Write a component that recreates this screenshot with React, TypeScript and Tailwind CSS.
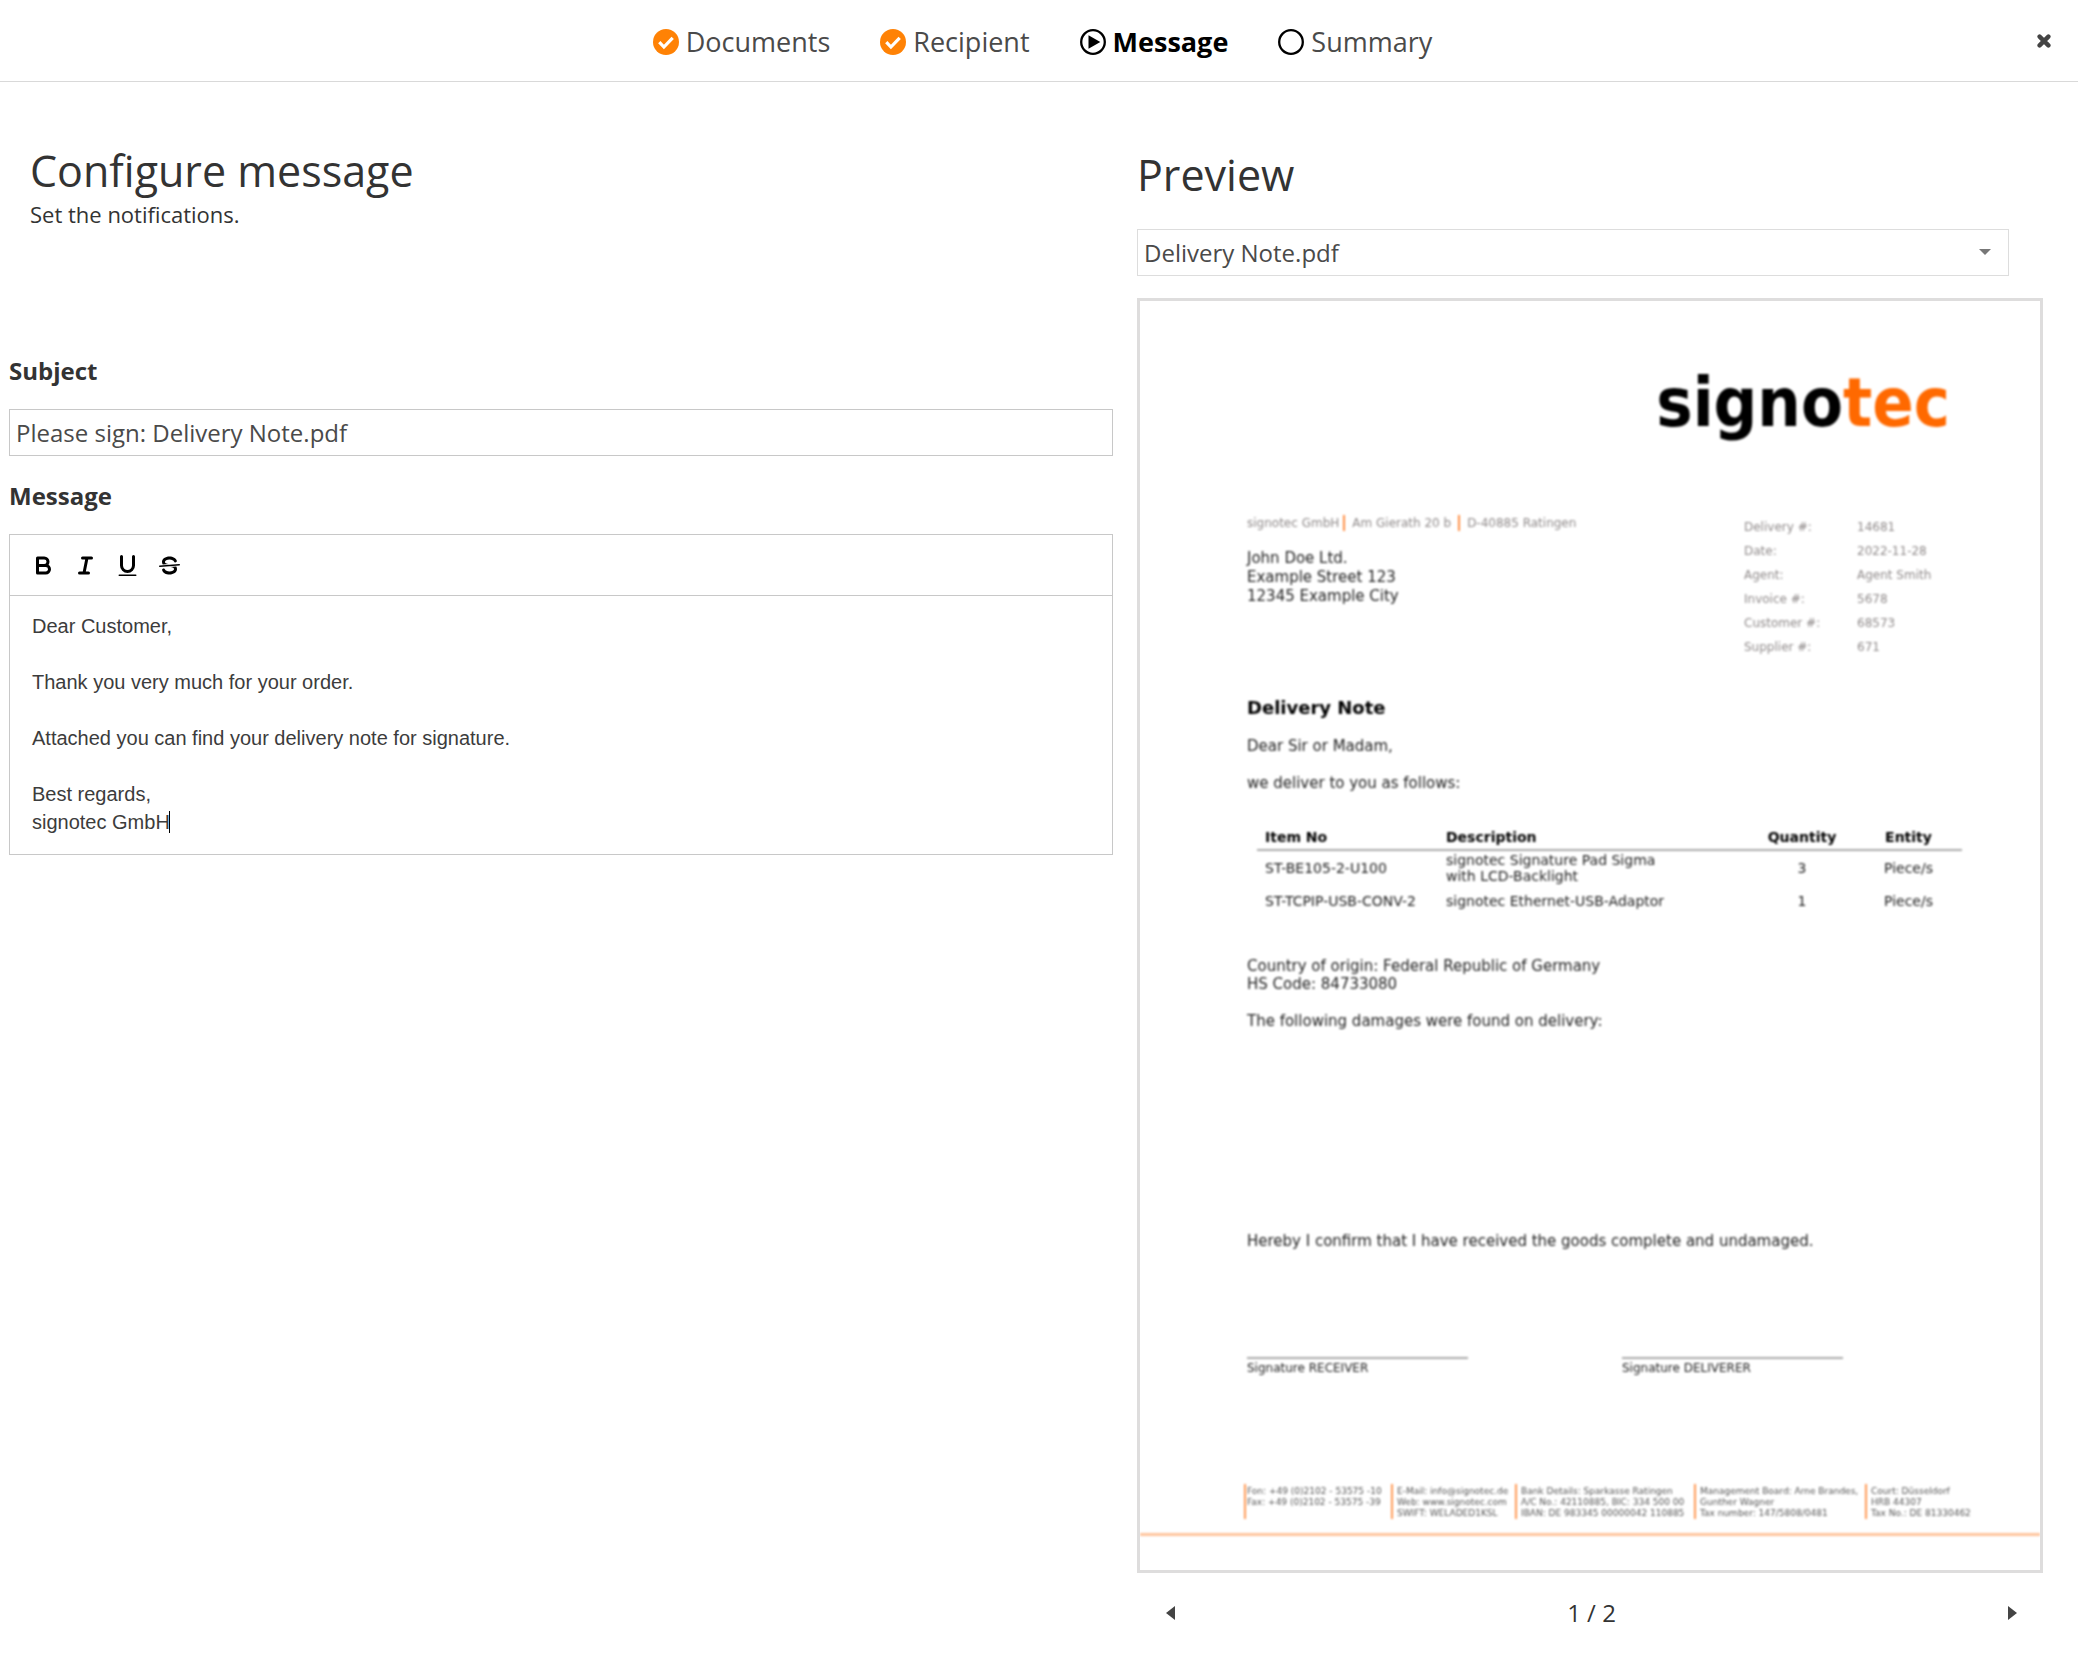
import { useState } from "react";
import type { ReactNode } from "react";

type StepState = "done" | "active" | "open";

const steps: { label: string; state: StepState }[] = [
    { label: "Documents", state: "done" },
    { label: "Recipient", state: "done" },
    { label: "Message", state: "active" },
    { label: "Summary", state: "open" },
];

const details = [
    ["Delivery #:", "14681"],
    ["Date:", "2022-11-28"],
    ["Agent:", "Agent Smith"],
    ["Invoice #:", "5678"],
    ["Customer #:", "68573"],
    ["Supplier #:", "671"],
];

const items = [
    { no: "ST-BE105-2-U100", description: ["signotec Signature Pad Sigma", "with LCD-Backlight"], quantity: 3, entity: "Piece/s" },
    { no: "ST-TCPIP-USB-CONV-2", description: ["signotec Ethernet-USB-Adaptor"], quantity: 1, entity: "Piece/s" },
];

const footerColumns = [
    { width: "w-[147px] pl-px", lines: ["Fon: +49 (0)2102 - 53575 -10", "Fax: +49 (0)2102 - 53575 -39"] },
    { width: "w-[124px] pl-1", lines: ["E-Mail: info@signotec.de", "Web: www.signotec.com", "SWIFT: WELADED1KSL"] },
    { width: "w-[179px] pl-1", lines: ["Bank Details: Sparkasse Ratingen", "A/C No.: 42110885, BIC: 334 500 00", "IBAN: DE 983345 00000042 110885"] },
    { width: "w-[171px] pl-1", lines: ["Management Board: Arne Brandes,", "Gunther Wagner", "Tax number: 147/5808/0481"] },
    { width: "pl-1", lines: ["Court: Düsseldorf", "HRB 44307", "Tax No.: DE 81330462"] },
];

const defaultMessage = [
    "Dear Customer,",
    "",
    "Thank you very much for your order.",
    "",
    "Attached you can find your delivery note for signature.",
    "",
    "Best regards,",
    "signotec GmbH",
].join("\n");

const StepIcon = ({ state }: { state: StepState }) => (
    <svg viewBox="0 0 26 26" className="size-[26px] shrink-0" fill="none" aria-hidden="true">
        {state === "done" && (
            <>
                <circle cx="13" cy="13" r="13" fill="#ff8205" />
                <path d="M6.3 13.2l4.6 4.8 8.8-9.2" stroke="#fff" strokeWidth="3.2" />
            </>
        )}
        {state === "active" && (
            <>
                <circle cx="13" cy="13" r="11.8" stroke="#000" strokeWidth="2.3" />
                <path d="M8.5 6.2v13.6L20.3 13z" fill="#000" />
            </>
        )}
        {state === "open" && <circle cx="13" cy="13" r="11.8" stroke="#000" strokeWidth="2.3" />}
    </svg>
);

const ToolbarButton = ({ label, children }: { label: string; children: ReactNode }) => (
    <button type="button" aria-label={label} className="flex h-9 w-[42px] items-center justify-center text-black cursor-pointer">
        <svg viewBox="0 0 18 18" className="size-[27px]" fill="none" stroke="currentColor" strokeWidth="2" strokeLinecap="round" strokeLinejoin="round">
            {children}
        </svg>
    </button>
);

const Header = () => (
    <header className="grid grid-cols-[1fr_auto_1fr] items-center h-[82px] border-b border-[#d9d9d9]">
        <ol className="col-start-2 flex items-center gap-[50px] pt-0.5 pl-[7px] text-[27px] leading-9 text-[#4a4a4a]">
            {steps.map((step) => (
                <li
                    key={step.label}
                    aria-current={step.state === "active" ? "step" : undefined}
                    className={`flex items-center gap-[7px] ${step.state === "active" ? "font-bold text-black" : ""}`}
                >
                    <StepIcon state={step.state} />
                    {step.label}
                </li>
            ))}
        </ol>
        <button type="button" aria-label="Close" className="justify-self-end mr-[27px] cursor-pointer">
            <svg viewBox="0 0 14 14" className="size-[14px]" stroke="#444" strokeWidth="4.4" strokeLinecap="round">
                <path d="M2.6 2.6l8.8 8.8M11.4 2.6l-8.8 8.8" />
            </svg>
        </button>
    </header>
);

const MessageForm = () => {
    const [subject, setSubject] = useState("Please sign: Delivery Note.pdf");
    const [message, setMessage] = useState(defaultMessage);

    return (
        <form className="pt-[63px]">
            <div className="pl-[21px]">
                <h1 className="text-[43px] leading-[52px]">Configure message</h1>
                <p className="mt-[3px] text-[22px] leading-7">Set the notifications.</p>
            </div>

            {/* Subject */}
            <label htmlFor="subject" className="mt-[127px] block text-2xl font-bold">
                Subject
            </label>
            <input
                id="subject"
                type="text"
                className="mt-[22px] block h-[47px] w-full border border-[#c8c8c8] px-1.5 text-2xl text-[#4a4a4a] focus:outline-none"
                value={subject}
                onChange={(e) => setSubject(e.target.value)}
            />

            {/* Message */}
            <label htmlFor="message" className="mt-6 block text-2xl font-bold">
                Message
            </label>
            <div className="mt-[22px] border border-[#c8c8c8]">
                <div className="flex border-b border-[#c8c8c8] p-3">
                    <ToolbarButton label="Bold">
                        <path d="M5,4H9.5A2.5,2.5,0,0,1,12,6.5v0A2.5,2.5,0,0,1,9.5,9H5V4Z" />
                        <path d="M5,9h5.5A2.5,2.5,0,0,1,13,11.5v0A2.5,2.5,0,0,1,10.5,14H5V9Z" />
                    </ToolbarButton>
                    <ToolbarButton label="Italic">
                        <path d="M7 4h6M5 14h6M8 14L10 4" />
                    </ToolbarButton>
                    <ToolbarButton label="Underline">
                        <path d="M5,3V9a4.012,4.012,0,0,0,4,4H9a4.012,4.012,0,0,0,4-4V3" />
                        <rect x="3" y="15" width="12" height="1" rx="0.5" fill="currentColor" stroke="none" />
                    </ToolbarButton>
                    <ToolbarButton label="Strikethrough">
                        <path d="M15.5 8.5l-13 1" strokeWidth="1" />
                        <path
                            fill="currentColor"
                            stroke="none"
                            d="M9.007,8C6.542,7.791,6,7.519,6,6.5,6,5.792,7.283,5,9,5c1.571,0,2.765.679,2.969,1.309a1,1,0,0,0,1.9-.617C13.356,4.106,11.354,3,9,3,6.2,3,4,4.538,4,6.5a3.2,3.2,0,0,0,.5,1.843Z"
                        />
                        <path
                            fill="currentColor"
                            stroke="none"
                            d="M8.984,10C11.457,10.208,12,10.479,12,11.5c0,0.708-1.283,1.5-3,1.5-1.571,0-2.765-.679-2.969-1.309a1,1,0,1,0-1.9.617C4.644,13.894,6.646,15,9,15c2.8,0,5-1.538,5-3.5a3.2,3.2,0,0,0-.5-1.843Z"
                        />
                    </ToolbarButton>
                </div>
                <div className="relative">
                    <textarea
                        id="message"
                        rows={8}
                        className="block w-full resize-none px-[22px] pt-4 pb-[18px] font-['Liberation_Sans',Arial,sans-serif] text-xl leading-7 text-[#3c3c3c] focus:outline-none"
                        value={message}
                        onChange={(e) => setMessage(e.target.value)}
                    />
                    <span className="absolute bottom-[21px] left-[159px] h-[22px] w-px bg-black" />
                </div>
            </div>
        </form>
    );
};

const DocumentPage = () => (
    <article className="overflow-hidden border-[3px] border-[#dedddd] bg-white">
        <div className="pb-[34px] font-['DejaVu_Sans',Verdana,sans-serif] text-[15px] leading-[18px] text-[#222] blur-[1px]">
            <div className="pt-[65px] pr-[90px] text-right font-['DejaVu_Sans_Condensed','DejaVu_Sans',sans-serif] text-[68px] leading-[74px] font-bold text-black">
                signo<span className="text-[#ff6900]">tec</span>
            </div>

            {/* Addresses and document details */}
            <div className="mt-[75px] flex items-start justify-between pl-[107px] pr-[60px]">
                <div>
                    <p className="flex text-xs leading-4 text-[#8f8a8a]">
                        <span className="border-r-2 border-[#ff8f45] pr-1">signotec GmbH</span>
                        <span className="border-r-2 border-[#ff8f45] px-[7px]">Am Gierath 20 b</span>
                        <span className="pl-[7px]">D-40885 Ratingen</span>
                    </p>
                    <address className="mt-[18px] leading-[19px] not-italic">
                        John Doe Ltd.
                        <br />
                        Example Street 123
                        <br />
                        12345 Example City
                    </address>
                </div>
                <dl className="grid grid-cols-[113px_123px] text-xs leading-6 text-[#8f8a8a]">
                    {details.map(([label, value]) => (
                        <div key={label} className="contents">
                            <dt>{label}</dt>
                            <dd>{value}</dd>
                        </div>
                    ))}
                </dl>
            </div>

            <div className="pl-[107px]">
                <h3 className="mt-[39px] text-lg leading-[19px] font-bold text-black">Delivery Note</h3>
                <p className="mt-5 leading-[19px]">Dear Sir or Madam,</p>
                <p className="mt-[18px] leading-[19px]">we deliver to you as follows:</p>
            </div>

            {/* Delivered items */}
            <div className="mt-9 pl-[117px] pr-[78px]">
                <table className="w-full table-fixed text-sm leading-4">
                    <thead className="text-black">
                        <tr className="border-b-2 border-[#aaa]">
                            <th className="w-[189px] pb-1 pl-2 text-left">Item No</th>
                            <th className="pb-1 text-left">Description</th>
                            <th className="w-[106px] pb-1">Quantity</th>
                            <th className="w-[107px] pb-1">Entity</th>
                        </tr>
                    </thead>
                    <tbody>
                        {items.map((item) => (
                            <tr key={item.no}>
                                <td className="pt-px pb-2 pl-2 whitespace-nowrap">{item.no}</td>
                                <td className="pt-px pb-2">
                                    {item.description.map((line) => (
                                        <div key={line}>{line}</div>
                                    ))}
                                </td>
                                <td className="pt-px pb-2 text-center">{item.quantity}</td>
                                <td className="pt-px pb-2 text-center">{item.entity}</td>
                            </tr>
                        ))}
                    </tbody>
                </table>
            </div>

            <div className="pl-[107px]">
                <p className="mt-10">
                    Country of origin: Federal Republic of Germany
                    <br />
                    HS Code: 84733080
                </p>
                <p className="mt-[19px]">The following damages were found on delivery:</p>
                <p className="mt-[202px]">Hereby I confirm that I have received the goods complete and undamaged.</p>
            </div>

            {/* Signatures */}
            <div className="mt-[107px] flex gap-[154px] pl-[107px] text-xs leading-4">
                <p className="w-[221px] border-t-2 border-[#aaa] pt-px">Signature RECEIVER</p>
                <p className="w-[221px] border-t-2 border-[#aaa] pt-px">Signature DELIVERER</p>
            </div>

            <footer>
                <div className="mt-[108px] flex pl-[104px] text-[9px] leading-[11px] whitespace-nowrap text-[#555]">
                    {footerColumns.map((column) => (
                        <div key={column.lines[0]} className={`border-l-2 border-[#ff9a55] pt-0.5 ${column.width}`}>
                            {column.lines.map((line) => (
                                <div key={line}>{line}</div>
                            ))}
                        </div>
                    ))}
                </div>
                <div className="mt-3.5 h-[3px] bg-[#ffc49c]" />
            </footer>
        </div>
    </article>
);

const Preview = () => (
    <section className="pt-[67px]">
        <h2 className="text-[43px] leading-[52px]">Preview</h2>
        <div className="relative mt-7 mr-[34px]">
            <select
                aria-label="Document"
                className="block h-[47px] w-full appearance-none border border-[#ddd] bg-white px-1.5 text-2xl text-[#4a4a4a] focus:outline-none"
            >
                <option>Delivery Note.pdf</option>
            </select>
            <svg viewBox="0 0 12 6" className="pointer-events-none absolute top-5 right-[18px] h-1.5 w-3" fill="#777">
                <path d="M0 0h12L6 6z" />
            </svg>
        </div>

        <div className="mt-[22px]">
            <DocumentPage />
        </div>

        {/* Pages */}
        <nav className="mt-6 flex items-center justify-between pr-[26px] pl-[29px] text-2xl">
            <button type="button" aria-label="Previous page" className="cursor-pointer">
                <svg viewBox="0 0 9 14" className="h-3.5 w-[9px]" fill="#444">
                    <path d="M9 0v14L0 7z" />
                </svg>
            </button>
            <span>1 / 2</span>
            <button type="button" aria-label="Next page" className="cursor-pointer">
                <svg viewBox="0 0 9 14" className="h-3.5 w-[9px]" fill="#444">
                    <path d="M0 0v14l9-7z" />
                </svg>
            </button>
        </nav>
    </section>
);

const App = () => {
    return (
        <div className="min-h-screen bg-white font-['Open_Sans',sans-serif] text-[#333]">
            <Header />
            <main className="grid grid-cols-[1104fr_906fr] gap-6 pl-[9px] pr-[35px]">
                <MessageForm />
                <Preview />
            </main>
        </div>
    );
};

export default App;
